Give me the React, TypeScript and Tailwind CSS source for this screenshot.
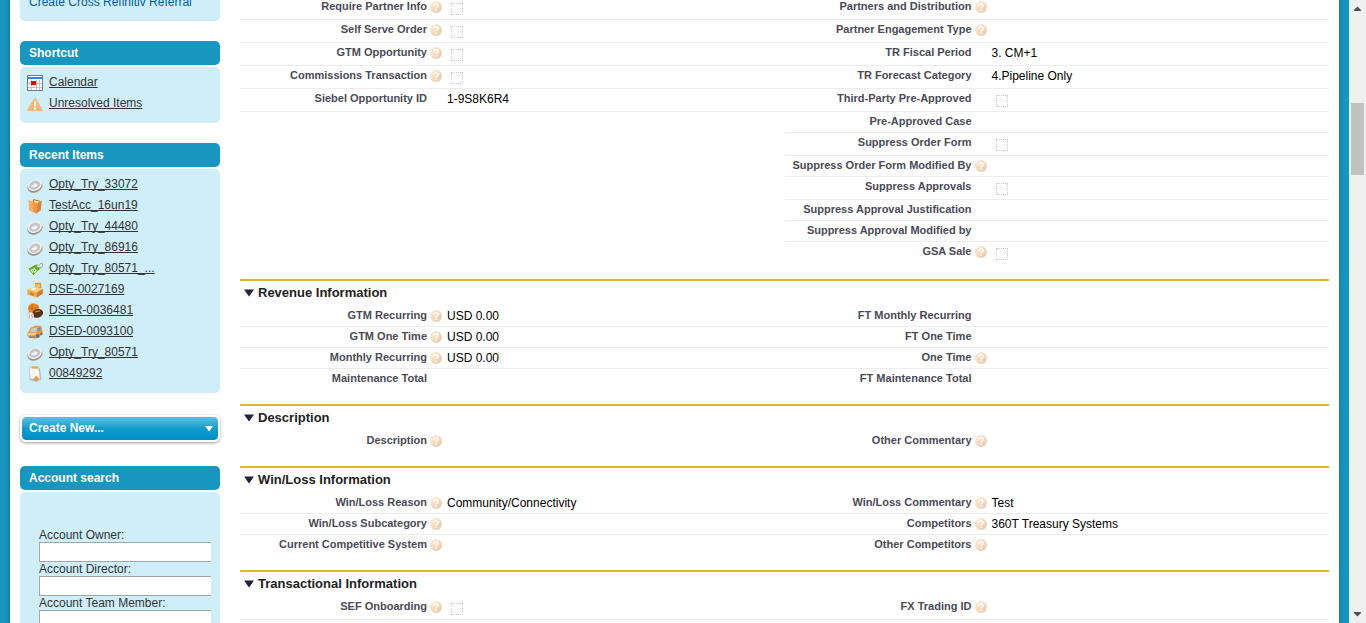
import type { ReactNode } from "react";

type Field = {
  label: string;
  help?: boolean;
  value?: string;
  check?: boolean;
};

type Row = [Field | null, Field];

const generalRows: Row[] = [
  [{ label: "Require Partner Info", help: true, check: true }, { label: "Partners and Distribution", help: true }],
  [{ label: "Self Serve Order", help: true, check: true }, { label: "Partner Engagement Type", help: true }],
  [{ label: "GTM Opportunity", help: true, check: true }, { label: "TR Fiscal Period", value: "3. CM+1" }],
  [{ label: "Commissions Transaction", help: true, check: true }, { label: "TR Forecast Category", value: "4.Pipeline Only" }],
  [{ label: "Siebel Opportunity ID", value: "1-9S8K6R4" }, { label: "Third-Party Pre-Approved", check: true }],
  [null, { label: "Pre-Approved Case" }],
  [null, { label: "Suppress Order Form", check: true }],
  [null, { label: "Suppress Order Form Modified By", help: true }],
  [null, { label: "Suppress Approvals", check: true }],
  [null, { label: "Suppress Approval Justification" }],
  [null, { label: "Suppress Approval Modified by" }],
  [null, { label: "GSA Sale", help: true, check: true }],
];

type SectionData = { title: string; rows: Row[]; closed?: boolean };

const sections: SectionData[] = [
  {
    title: "Revenue Information",
    rows: [
      [{ label: "GTM Recurring", help: true, value: "USD 0.00" }, { label: "FT Monthly Recurring" }],
      [{ label: "GTM One Time", help: true, value: "USD 0.00" }, { label: "FT One Time" }],
      [{ label: "Monthly Recurring", help: true, value: "USD 0.00" }, { label: "One Time", help: true }],
      [{ label: "Maintenance Total" }, { label: "FT Maintenance Total" }],
    ],
  },
  {
    title: "Description",
    rows: [[{ label: "Description", help: true }, { label: "Other Commentary", help: true }]],
  },
  {
    title: "Win/Loss Information",
    rows: [
      [
        { label: "Win/Loss Reason", help: true, value: "Community/Connectivity" },
        { label: "Win/Loss Commentary", help: true, value: "Test" },
      ],
      [
        { label: "Win/Loss Subcategory", help: true },
        { label: "Competitors", help: true, value: "360T Treasury Systems" },
      ],
      [{ label: "Current Competitive System", help: true }, { label: "Other Competitors", help: true }],
    ],
  },
  {
    title: "Transactional Information",
    closed: true,
    rows: [[{ label: "SEF Onboarding", help: true, check: true }, { label: "FX Trading ID", help: true }]],
  },
];

const fieldId = (label: string) => label.toLowerCase().replace(/[^a-z0-9]+/g, "-");

function HelpIcon() {
  return (
    <svg viewBox="0 0 12 12" className="h-3 w-3" aria-hidden="true">
      <defs>
        <linearGradient id="help-fill" x1="0" y1="0" x2="1" y2="1">
          <stop offset="0" stopColor="#fbeeda" />
          <stop offset="0.5" stopColor="#f5dcc0" />
          <stop offset="1" stopColor="#e6c3a8" />
        </linearGradient>
      </defs>
      <circle cx="6" cy="6" r="6" fill="url(#help-fill)" />
      <path d="M4 4.8C4 3.4 4.9 2.8 6 2.8s2 .7 2 1.7C8 5.7 6.2 5.8 6.2 7.2" fill="none" stroke="#fff" strokeWidth="1.4" />
      <circle cx="6.2" cy="9" r=".85" fill="#fff" />
    </svg>
  );
}

function FieldCells({ field, tall, ruled }: { field: Field | null; tall: boolean; ruled: boolean }) {
  if (!field) {
    return <td colSpan={2} />;
  }
  const height = tall ? "h-[22px]" : "h-5";
  const border = ruled ? "border-b border-[#ececec]" : "";
  return (
    <>
      <th scope="row" className={`p-0 align-top font-bold ${border}`}>
        <div className={`flex justify-end pt-px text-right text-[11px] leading-4 text-[#4a4a56] ${height}`}>
          {field.check ? <label htmlFor={fieldId(field.label)}>{field.label}</label> : <span>{field.label}</span>}
          <span className="flex w-[15px] shrink-0 justify-end pt-[3px]">{field.help && <HelpIcon />}</span>
        </div>
      </th>
      <td className={`p-0 align-top ${border}`}>
        <div className={`flex pl-[5px] pt-[2px] text-[12px] leading-4 text-black ${height}`}>
          {field.check ? (
            <input
              id={fieldId(field.label)}
              type="checkbox"
              disabled
              className="ml-1 mt-1 h-3 w-3 appearance-none border border-dotted border-[#c8c8c8] bg-white"
            />
          ) : (
            field.value
          )}
        </div>
      </td>
    </>
  );
}

function FieldTable({ rows, closed = false }: { rows: Row[]; closed?: boolean }) {
  return (
    <table className="w-full table-fixed border-separate border-spacing-0">
      <colgroup>
        <col className="w-[202px]" />
        <col />
        <col className="w-[202px]" />
        <col />
      </colgroup>
      <tbody>
        {rows.map(([left, right], i) => {
          const tall = Boolean(left?.check || right.check);
          const ruled = closed || i < rows.length - 1;
          return (
            <tr key={right.label}>
              <FieldCells field={left} tall={tall} ruled={ruled} />
              <FieldCells field={right} tall={tall} ruled={ruled} />
            </tr>
          );
        })}
      </tbody>
    </table>
  );
}

function Section({ title, rows, closed }: SectionData) {
  return (
    <section className="mt-[15px] border-t-2 border-[#dcb62c]">
      <h3 className="text-[13px] font-bold leading-5 text-[#222]">
        <button type="button" className="flex h-[25px] w-full items-center gap-1 pb-px pl-1 text-left">
          <svg viewBox="0 0 10 8" className="h-2 w-[10px]" aria-hidden="true">
            <path d="M0 0.5H10L5 7.5Z" fill="#23233a" />
          </svg>
          <span>{title}</span>
        </button>
      </h3>
      <FieldTable rows={rows} closed={closed} />
    </section>
  );
}

function CalendarIcon() {
  return (
    <svg viewBox="0 0 16 16" className="h-4 w-4">
      <rect width="16" height="16" fill="#77777a" />
      <rect x="1" y="1" width="14" height="14" fill="#fff" />
      <rect x="0" y="2" width="15" height="2" fill="#2f86e4" />
      <path d="M4.5 5V15M9.5 5V15M12.5 5V15M1 8.5H15M1 12.5H15" stroke="#c4c4c8" />
      <rect x="4" y="6" width="5" height="4" fill="#e60000" />
    </svg>
  );
}

function WarningIcon() {
  return (
    <svg viewBox="0 0 16 16" className="h-4 w-4">
      <path d="M8 2.4L15.2 14.2H.8Z" fill="#f5ad66" stroke="#f3b981" strokeWidth="1.4" strokeLinejoin="round" />
      <path d="M8 3L2 13H14Z" fill="#fbc080" opacity=".5" />
      <path d="M8 5.5V10.5" stroke="#fff" strokeWidth="2" />
      <rect x="7" y="11.5" width="2" height="2" fill="#fff" />
    </svg>
  );
}

function CoinIcon() {
  return (
    <svg viewBox="0 0 16 16" className="h-4 w-4">
      <ellipse cx="8.3" cy="9.6" rx="7.6" ry="5.7" fill="#c9a462" transform="rotate(-24 8.3 9.6)" />
      <ellipse cx="7.7" cy="9.4" rx="7.6" ry="5.6" fill="#8f9296" transform="rotate(-24 7.7 9.4)" />
      <ellipse cx="7.8" cy="8" rx="7.4" ry="5.6" fill="#f1f0ec" transform="rotate(-24 7.8 8)" />
      <ellipse cx="7.7" cy="8.1" rx="5.8" ry="4.2" fill="#c3c5c7" transform="rotate(-24 7.7 8.1)" />
      <path d="M4.4 9.4L5.3 7.2L7 8L7.8 5.4L9.2 7.4L11 6.6L9.8 9.2L7 10.4Z" fill="#f7f7f7" />
    </svg>
  );
}

function FolderIcon() {
  return (
    <svg viewBox="0 0 16 16" className="h-4 w-4">
      <path d="M6 1L14.4 3L13.8 12L9 15.5L6 12Z" fill="#d77a28" />
      <path d="M7 2.5L13 3.8L12.8 10L9 13Z" fill="#fff4df" />
      <path d="M10.4 5L14.4 3L13.8 12L9 15.6Z" fill="#d98438" />
      <path d="M1.6 2.4L10.4 5L9.2 15.5L2.4 12.2Z" fill="#f39643" />
      <path d="M1.6 2.4L5.6 3.6L6 13.9L2.4 12.2Z" fill="#f8ad62" />
    </svg>
  );
}

function TagIcon() {
  return (
    <svg viewBox="0 0 16 16" className="h-4 w-4">
      <path d="M.8 7.4L9 3L13.6 3.4L13.8 7.8L6.2 14.8Z" fill="#5fb02a" stroke="#f4f8ee" strokeWidth=".9" />
      <circle cx="11.8" cy="5.2" r="1.4" fill="#fff" />
      <path d="M11.8 5.2C13 1.6 15.6 1.4 15.6 3.8S13.8 6.8 12.4 7" fill="none" stroke="#8a8a8a" strokeWidth=".8" />
      <path d="M3.8 8.2L6 12M5.8 8.6L7.4 7.4L9.2 9.8L7.6 11.2Z" fill="none" stroke="#e6f6d4" strokeWidth="1.1" />
    </svg>
  );
}

function DeskIcon() {
  return (
    <svg viewBox="0 0 16 16" className="h-4 w-4">
      <path d="M7.8 1L14 .8L14.4 6L9 7.4Z" fill="#eb9034" />
      <path d="M9 2.2L12.8 2L13.2 5L9.6 5.8Z" fill="#f8bd66" />
      <path d="M.2 7.6L7.6 4.6L15.8 6.8L9.8 10.4Z" fill="#fbd07e" />
      <path d="M.2 7.6L9.8 10.4V15.6L.4 12.6Z" fill="#f3a541" />
      <path d="M3.4 10.4L6.6 11.4V14L3.4 12.8Z" fill="#c97c2c" />
      <path d="M9.8 10.4L15.8 6.8V11.8L9.8 15.6Z" fill="#d17d28" />
      <path d="M4 7L7 5.8L9.4 6.6L6.2 8.2Z" fill="#fff" />
    </svg>
  );
}

function BallsIcon() {
  return (
    <svg viewBox="0 0 16 16" className="h-4 w-4">
      <circle cx="6.6" cy="5.8" r="5.6" fill="#ef8421" />
      <path d="M1.4 4.6C5 6.4 8.5 5.4 11.4 3.2M5.2 .6C4.6 4 6 8 8 10.2" fill="none" stroke="#b3570f" strokeWidth=".6" />
      <ellipse cx="10.6" cy="10.4" rx="5.6" ry="4.3" fill="#5f3114" transform="rotate(-18 10.6 10.4)" />
      <path d="M7.8 9L13 7.8" stroke="#d9bda2" strokeWidth=".8" />
      <circle cx="3.4" cy="12.6" r="3.3" fill="#f4f1ef" stroke="#bdb6b1" strokeWidth=".5" />
      <path d="M1.8 10.4C3 11.8 3 13.2 2 14.9M5.4 10.8C4.4 12.2 4.7 13.5 5.4 14.4" fill="none" stroke="#cf5858" strokeWidth=".6" />
    </svg>
  );
}

function CarIcon() {
  return (
    <svg viewBox="0 0 16 16" className="h-4 w-4">
      <path d="M.4 9.4L3.2 4L8.5 1.4L14.4 2L15.6 7.6L14.8 11L9.8 14.4L2.2 14L.4 12Z" fill="#f29b38" />
      <path d="M2.8 8L4.8 4.4L10 3.4L9.4 7.6Z" fill="#b9d3e4" />
      <path d="M10.8 3.4L13.6 3.6L14.2 6.4L10.5 7.5Z" fill="#6d98b5" />
      <path d="M1 9.2L9.5 8.4L8.7 10.8L1.4 11.2Z" fill="#fbd18b" />
      <circle cx="10.6" cy="12" r="2" fill="#6a6b6e" />
      <circle cx="14.4" cy="9.8" r="1.3" fill="#6a6b6e" />
      <path d="M1.7 12.2H7.8V14H2.6Z" fill="#8a8784" />
      <circle cx="2.2" cy="10.5" r=".8" fill="#fff" />
    </svg>
  );
}

function CaseIcon() {
  return (
    <svg viewBox="0 0 16 16" className="h-4 w-4">
      <path d="M3.2 1.4L12.8 2L14.4 13.4L9 15.8L2.6 13.8Z" fill="#b0b3b6" />
      <path d="M2.4 1H11.6L13.2 13H3.2Z" fill="#f9f9f7" stroke="#c2c4c5" strokeWidth=".8" />
      <path d="M4.5 .4H11V2.6H4.5Z" fill="#e9a53b" />
      <path d="M9 9.8L12 12.2L9.2 15.6L6.4 13Z" fill="#e69a3a" />
    </svg>
  );
}

const shortcuts = [
  { label: "Calendar", icon: <CalendarIcon /> },
  { label: "Unresolved Items", icon: <WarningIcon /> },
];

const recentItems = [
  { label: "Opty_Try_33072", icon: <CoinIcon /> },
  { label: "TestAcc_16un19", icon: <FolderIcon /> },
  { label: "Opty_Try_44480", icon: <CoinIcon /> },
  { label: "Opty_Try_86916", icon: <CoinIcon /> },
  { label: "Opty_Try_80571_...", icon: <TagIcon /> },
  { label: "DSE-0027169", icon: <DeskIcon /> },
  { label: "DSER-0036481", icon: <BallsIcon /> },
  { label: "DSED-0093100", icon: <CarIcon /> },
  { label: "Opty_Try_80571", icon: <CoinIcon /> },
  { label: "00849292", icon: <CaseIcon /> },
];

function Panel({ title, children }: { title: string; children: ReactNode }) {
  return (
    <section className="flex flex-col gap-[2px]">
      <h2 className="h-6 rounded-[5px] bg-[#1797c0] pl-[9px] text-[12px] font-bold leading-6 text-white">{title}</h2>
      <div className="rounded-[5px] bg-[#cfeef8]">{children}</div>
    </section>
  );
}

function LinkList({ items }: { items: { label: string; icon: ReactNode }[] }) {
  return (
    <ul className="pb-[9px] pl-[7px] pt-[5px]">
      {items.map((item) => (
        <li key={item.label} className="h-[21px]">
          <a href="#" className="flex gap-[6px] text-[#333]">
            <span className="pt-[3px]">{item.icon}</span>
            <span className="leading-[21px] underline [text-decoration-skip-ink:none]">{item.label}</span>
          </a>
        </li>
      ))}
    </ul>
  );
}

function Sidebar() {
  return (
    <aside className="w-[200px] shrink-0 text-[12px] text-[#333]">
      <div className="h-[21px] overflow-hidden rounded-b-[5px] bg-[#cfeef8] pl-[9px]">
        <a href="#" className="-mt-[6px] block leading-4 text-[#015ba7]">
          Create Cross Refinitiv Referral
        </a>
      </div>
      <div className="mt-5 flex flex-col gap-5">
        <Panel title="Shortcut">
          <LinkList items={shortcuts} />
        </Panel>
        <Panel title="Recent Items">
          <LinkList items={recentItems} />
        </Panel>
      </div>
      <button
        type="button"
        className="mt-[22px] flex h-[27px] w-full items-center justify-between rounded-[6px] border-2 border-white bg-linear-to-b from-[#5cbfe2] via-[#0c9bcb] to-[#0090c6] bg-clip-padding pb-px pl-[7px] pr-[5px] font-bold text-white shadow-[0_1px_3px_rgba(0,0,0,0.4)]"
      >
        <span>Create New...</span>
        <svg viewBox="0 0 8 6" className="mt-[2px] h-[6px] w-2" aria-hidden="true">
          <path d="M0 0H8L4 5.5Z" fill="#fff" />
        </svg>
      </button>
      <div className="mt-6">
        <Panel title="Account search">
          <form className="pb-5 pl-[19px] pr-[9px] pt-9">
            {["Account Owner", "Account Director", "Account Team Member"].map((name) => (
              <div key={name}>
                <label htmlFor={fieldId(name)} className="block h-[14px] leading-[14px]">
                  {name}:
                </label>
                <input
                  id={fieldId(name)}
                  type="text"
                  className="block h-5 w-full border border-r-0 border-[#a5a5a5] bg-white px-1 outline-none"
                />
              </div>
            ))}
          </form>
        </Panel>
      </div>
    </aside>
  );
}

function ScrollBar() {
  return (
    <div className="flex w-[17px] shrink-0 flex-col items-center justify-between bg-[#f0f0f0]" aria-hidden="true">
      <svg viewBox="0 0 17 17" className="h-[17px] w-[17px]">
        <path d="M5 11V10L8.5 6.5L12 10V11Z" fill="#505050" />
      </svg>
      <div className="w-full flex-1 px-[2px] pt-[86px]">
        <div className="h-[72px] bg-[#c1c1c1]" />
      </div>
      <svg viewBox="0 0 17 17" className="h-[17px] w-[17px]">
        <path d="M5 6V7L8.5 10.5L12 7V6Z" fill="#505050" />
      </svg>
    </div>
  );
}

export default function App() {
  return (
    <div className="flex h-screen overflow-hidden bg-white font-['Liberation_Sans',Arial,sans-serif]">
      <div className="w-[10px] shrink-0 bg-linear-to-r from-[#1797c0] from-40% to-[#1683a8]" />
      <div className="flex min-w-0 flex-1 gap-5 px-[10px]">
        <Sidebar />
        <main className="-mt-[3px] min-w-0 flex-1">
          <FieldTable rows={generalRows} />
          {sections.map((section) => (
            <Section key={section.title} {...section} />
          ))}
        </main>
      </div>
      <div className="w-[10px] shrink-0 bg-linear-to-l from-[#1797c0] from-40% to-[#1683a8]" />
      <ScrollBar />
    </div>
  );
}
